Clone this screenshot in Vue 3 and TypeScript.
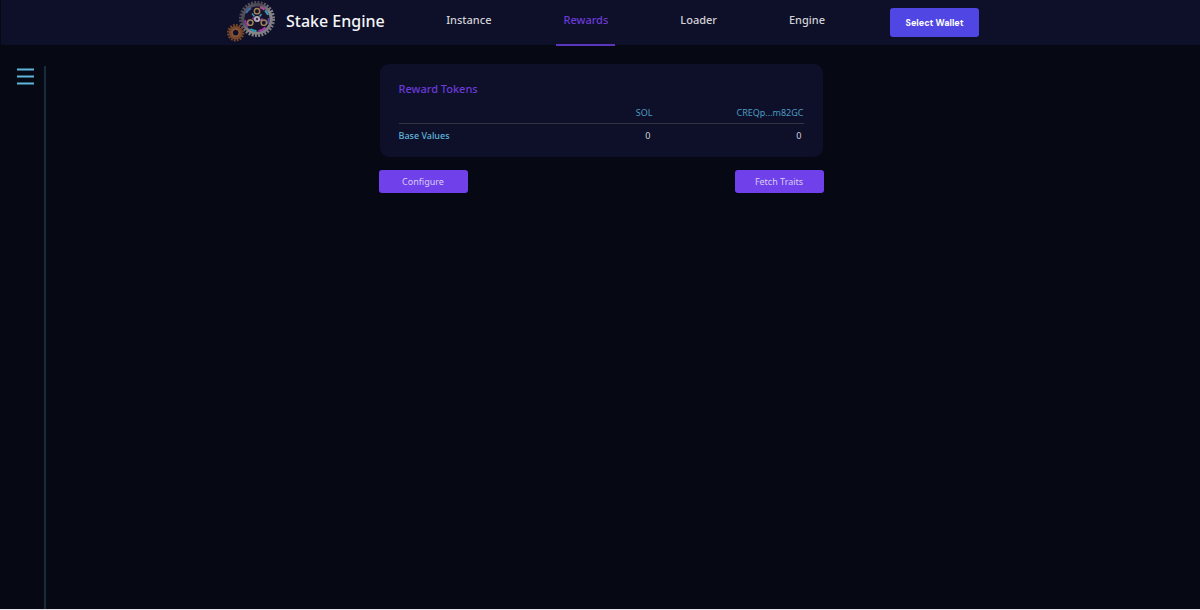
<script setup lang="ts">
interface Tab {
  label: string
  active: boolean
}

interface RewardToken {
  name: string
  base: number
}

const tabs: Tab[] = [
  { label: 'Instance', active: false },
  { label: 'Rewards', active: true },
  { label: 'Loader', active: false },
  { label: 'Engine', active: false },
]

const tokens: RewardToken[] = [
  { name: 'SOL', base: 0 },
  { name: 'CREQp...m82GC', base: 0 },
]
</script>

<template>
  <div class="page">
    <header class="topbar">
      <div class="topbar-inner">
        <div class="brand">
          <svg class="logo" viewBox="0 0 50 44" aria-hidden="true">
            <defs>
              <linearGradient id="steel" x1="0" y1="0" x2="1" y2="1">
                <stop offset="0" stop-color="#5d5966" />
                <stop offset="0.3" stop-color="#4a4652" />
                <stop offset="0.6" stop-color="#8b888c" />
                <stop offset="1" stop-color="#77757a" />
              </linearGradient>
            </defs>
            <circle cx="30" cy="20" r="16.500" fill="none" stroke="url(#steel)" stroke-width="3" stroke-dasharray="1.900 1.340" />
            <circle cx="30" cy="20" r="14" fill="none" stroke="url(#steel)" stroke-width="3.400" />
            <circle cx="30" cy="20" r="12.600" fill="#17132c" />
            <g fill="none" stroke-width="2">
              <path d="M19 14a12.500 12.500 0 0 1 5-5" stroke="#3e6ca8" />
              <path d="M33 8.200a12 12 0 0 1 4.500 2.500" stroke="#b04a95" />
              <path d="M38 11.500a12 12 0 0 1 3 4.500" stroke="#3699b6" />
              <path d="M18 21a12 12 0 0 0 3 6.500" stroke="#8a35a4" />
              <path d="M23.500 30a12 12 0 0 0 6 2" stroke="#2d9db4" />
              <path d="M31.500 32a12 12 0 0 0 7-3.500" stroke="#a33bad" />
              <path d="M41.800 19a12 12 0 0 1-1.500 6" stroke="#5b45a4" />
            </g>
            <path d="M25 14.500l2.500 3M34.500 15l-2 2.500" stroke="#3d8fae" stroke-width="1.600" />
            <path d="M25.500 19l2.500 1.500M32.500 22l3-2.500" stroke="#9a43a4" stroke-width="1.600" />
            <g fill="#17132c" stroke="#a08455" stroke-width="1.400">
              <circle cx="30" cy="12.200" r="2.700" />
              <circle cx="23.300" cy="23.700" r="2.700" />
              <circle cx="36.800" cy="23.700" r="2.700" />
            </g>
            <circle cx="30" cy="20" r="2.200" fill="#383140" stroke="#b4afc0" stroke-width="1.800" />
            <circle cx="8.700" cy="33.700" r="7.500" fill="none" stroke="#754729" stroke-width="2.400" stroke-dasharray="1.800 1.145" />
            <circle cx="8.700" cy="33.700" r="4.700" fill="none" stroke="#75482d" stroke-width="4.200" />
            <circle cx="8.700" cy="33.700" r="3.900" fill="none" stroke="#8d5c3b" stroke-width="1" />
          </svg>
          <span class="brand-name">Stake Engine</span>
        </div>
        <nav class="tabs">
          <a v-for="tab in tabs" :key="tab.label" href="#" class="tab" :class="{ active: tab.active }">{{ tab.label }}</a>
        </nav>
        <button type="button" class="wallet">Select Wallet</button>
      </div>
    </header>

    <div class="body">
      <aside class="rail">
        <button type="button" class="menu" aria-label="Open menu">
          <svg viewBox="0 0 17 18" aria-hidden="true">
            <path d="M0 1.500h17M0 8.500h17M0 15.500h17" stroke="#5eb5dc" stroke-width="2" />
          </svg>
        </button>
      </aside>
      <main class="content">
        <section class="card">
          <h2>Reward Tokens</h2>
          <table>
            <thead>
              <tr>
                <td></td>
                <th v-for="token in tokens" :key="token.name" scope="col">{{ token.name }}</th>
              </tr>
            </thead>
            <tbody>
              <tr>
                <th scope="row">Base Values</th>
                <td v-for="token in tokens" :key="token.name">{{ token.base }}</td>
              </tr>
            </tbody>
          </table>
        </section>
        <div class="actions">
          <button type="button">Configure</button>
          <button type="button">Fetch Traits</button>
        </div>
      </main>
    </div>
  </div>
</template>

<style>
body {
  margin: 0;
  background: #060814;
}
</style>

<style scoped>
.page {
  box-sizing: border-box;
  min-height: 100vh;
  display: flex;
  flex-direction: column;
  border-bottom: 1px solid #e4e5ea;
  background: #060814;
  color: #d2d2d8;
  font-family: "Segoe UI", "Noto Sans", sans-serif;
}

button {
  border: 0;
  padding: 0;
  font-family: inherit;
  cursor: pointer;
}

.topbar {
  height: 45px;
  margin-left: 1px;
  padding: 0 15px 0 16px;
  background: #0e0f28;
}

.topbar-inner {
  max-width: 752px;
  height: 100%;
  margin: 0 auto;
  padding-left: 4px;
  display: flex;
  gap: 58px;
}

.brand {
  height: 42px;
  margin-right: auto;
  display: flex;
  align-items: center;
  gap: 9px;
}

.logo {
  width: 50px;
  height: 44px;
}

.brand-name {
  color: #f5f5f8;
  font-size: 16px;
  font-weight: 500;
  line-height: 24px;
  white-space: nowrap;
}

.tabs {
  display: flex;
  gap: 58px;
  margin-left: -20px;
}

.tab {
  height: 44px;
  padding: 0 7px;
  border-bottom: 2px solid transparent;
  color: #d2d2d6;
  font-size: 11px;
  font-weight: 500;
  line-height: 40px;
  text-decoration: none;
}

.tab.active {
  border-color: #5c35bd;
  color: #6a3bd8;
}

.wallet {
  width: 89px;
  height: 29px;
  margin-top: 8px;
  border-radius: 3px;
  background: #5046e4;
  color: #fff;
  font-family: "DM Sans", Inter, sans-serif;
  font-size: 9px;
  font-weight: 700;
}

.body {
  flex: 1;
  display: grid;
  grid-template-columns: 46px 1fr 44px;
}

.rail {
  margin-top: 21px;
  border-right: 2px solid #182a3b;
}

.menu {
  display: block;
  margin: 2px 0 0 17px;
  background: none;
}

.menu svg {
  display: block;
  width: 17px;
  height: 18px;
}

.content {
  width: 100%;
  max-width: 445px;
  margin: 19px auto 0;
}

.card {
  margin: 0 1px;
  padding: 16px 19px 9px;
  border-radius: 9px;
  background: #0e0f28;
}

h2 {
  margin: 0;
  color: #6a3bd8;
  font-size: 11px;
  font-weight: 500;
  line-height: 18px;
}

table {
  width: 100%;
  border-collapse: collapse;
  table-layout: fixed;
  font-size: 9px;
  line-height: 14px;
}

th,
td {
  padding: 5px 0;
  text-align: right;
}

thead th,
thead td {
  padding: 8px 0 3px;
  border-bottom: 1px solid #35343e;
}

thead th:last-child {
  width: 151px;
}

thead th {
  color: #4b9cc4;
  font-weight: 400;
}

tbody th {
  color: #5eb5dc;
  font-weight: 500;
  text-align: left;
}

tbody td {
  padding-right: 2px;
}

.actions {
  display: flex;
  justify-content: space-between;
  margin-top: 13px;
}

.actions button {
  width: 89px;
  height: 23px;
  border-radius: 3px;
  background: #7040eb;
  color: #d8cdf5;
  font-size: 9px;
}
</style>
